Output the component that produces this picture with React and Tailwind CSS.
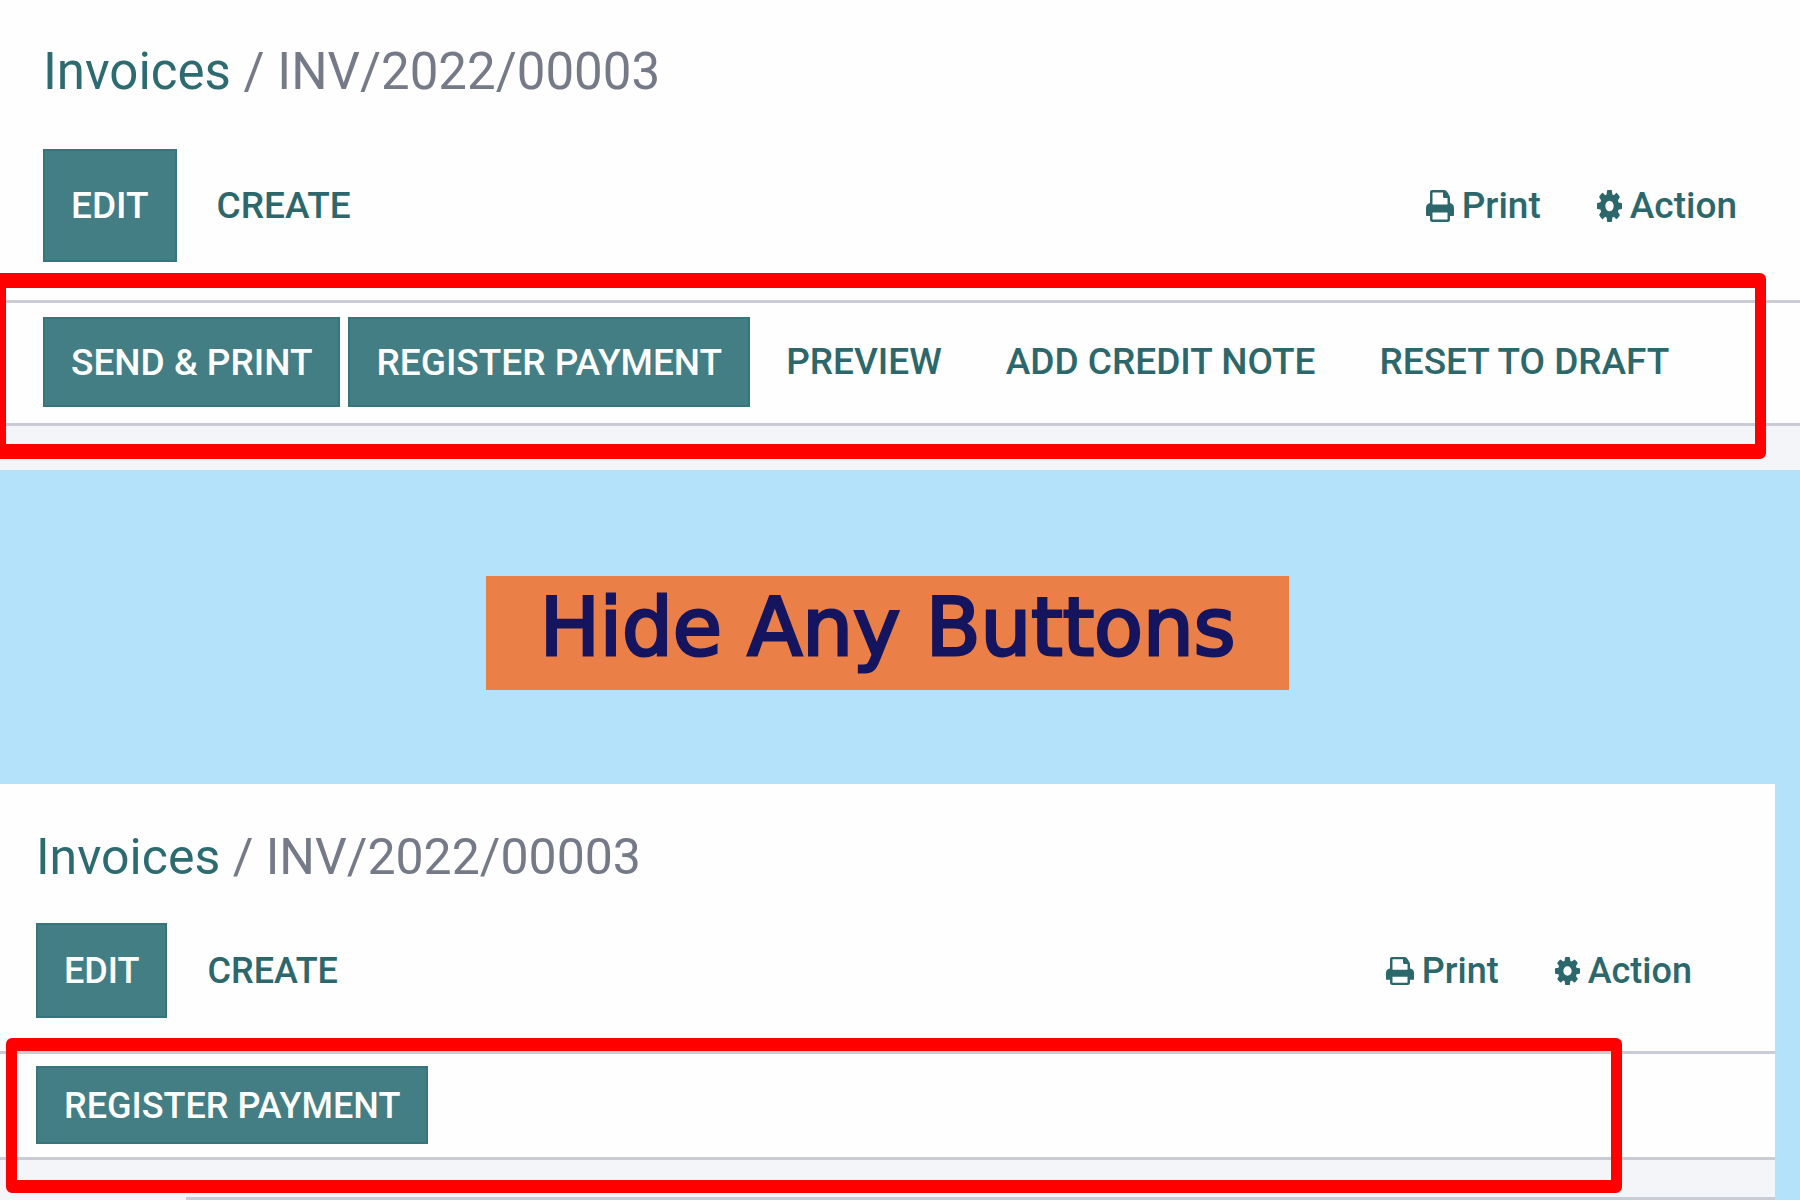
function PrintIcon({ className }) {
  return (
    <svg className={className} viewBox="0 0 28 32" preserveAspectRatio="none" fill="currentColor" aria-hidden="true">
      <path
        fillRule="evenodd"
        d="M6 0H18Q20 0 21 1.500L23 5Q24 6.500 24 8V13Q28 14 28 18V25Q28 26 27 26H24V29.500Q24 32 21.500 32H6.500Q4 32 4 29.500V26H1Q0 26 0 25V18Q0 14 4 13V2Q4 0 6 0ZM6.500 2.500V14.500H21.500V8H18.500Q17 8 17 6.500V2.500ZM6.500 22.500V29.500H21.500V22.500Z"
      />
    </svg>
  );
}

function CogIcon({ className }) {
  return (
    <svg className={className} viewBox="0 128 1536 1536" preserveAspectRatio="none" fill="currentColor" aria-hidden="true">
      <path d="M1024 896q0-106-75-181t-181-75-181 75-75 181 75 181 181 75 181-75 75-181zM1536 787v222q0 12-8 23t-20 13l-185 28q-19 54-39 91 35 50 107 138 10 12 10 25t-9 23q-27 37-99 108t-94 71q-12 0-26-9l-138-108q-44 23-91 38-16 136-29 186-7 28-36 28h-222q-14 0-24.5-8.5t-11.5-21.5l-28-184q-49-16-90-37l-141 107q-10 9-25 9-14 0-25-11-126-114-165-168-7-10-7-23 0-12 8-23 15-21 51-66.5t54-70.5q-27-50-41-99l-183-27q-13-2-21-12.5t-8-23.5v-222q0-12 8-23t19-13l186-28q14-46 39-92-40-57-107-138-10-12-10-24 0-10 9-23 26-36 98.5-107.5t94.5-71.5q13 0 26 10l138 107q44-23 91-38 16-136 29-186 7-28 36-28h222q14 0 24.5 8.5t11.5 21.5l28 184q49 16 90 37l142-107q9-9 24-9 13 0 25 10 129 119 165 170 7 8 7 22 0 12-8 23-15 21-51 66.5t-54 70.5q26 50 41 98l183 28q13 2 21 12.5t8 23.5z" />
    </svg>
  );
}

function Primary({ className, children }) {
  return (
    <button type="button" className={`bg-[#427e84] px-7 whitespace-nowrap text-white shadow-[inset_0_0_0_2px_#35757b] ${className}`}>
      {children}
    </button>
  );
}

function Plain({ children }) {
  return (
    <button type="button" className="flex items-center gap-2 px-7 whitespace-nowrap">
      {children}
    </button>
  );
}

function Breadcrumb({ className }) {
  return (
    <nav aria-label="Breadcrumb" className={`leading-[60px] font-normal whitespace-nowrap text-[#747a88] ${className}`}>
      <a href="#invoices" className="text-[#2c6b70]">Invoices</a> / <span aria-current="page">INV/2022/00003</span>
    </nav>
  );
}

function InvoiceBefore() {
  return (
    <section className="overflow-hidden bg-[#fefefe] text-[37px] leading-[46px] font-medium text-[#2c676b]">
      <header className="pt-[42px] pr-[35px] pb-[38px] pl-[43px]">
        <Breadcrumb className="text-[51px]" />
        <div className="mt-[47px] flex items-center justify-between">
          <div className="flex gap-3">
            <Primary className="pt-[34px] pb-[33px]">EDIT</Primary>
            <Plain>CREATE</Plain>
          </div>
          <div className="flex">
            <Plain><PrintIcon className="h-8 w-7" />Print</Plain>
            <Plain><CogIcon className="h-8 w-[25px]" />Action</Plain>
          </div>
        </div>
      </header>
      <div className="relative bg-[#f4f5f9] pb-11">
        <div className="flex gap-2 border-y-[3px] border-[#c9ccd4] bg-[#fefefe] pt-[14px] pb-4 pl-[43px]">
          <Primary className="pt-[23px] pb-[21px]">SEND &amp; PRINT</Primary>
          <Primary className="pt-[23px] pb-[21px]">REGISTER PAYMENT</Primary>
          <Plain>PREVIEW</Plain>
          <Plain>ADD CREDIT NOTE</Plain>
          <Plain>RESET TO DRAFT</Plain>
        </div>
        <div className="pointer-events-none absolute -top-[27px] right-[34px] bottom-[11px] -left-[5px] rounded-md border-x-[11px] border-y-[15px] border-[#ff0000]" />
      </div>
    </section>
  );
}

function InvoiceAfter() {
  return (
    <section className="mr-[25px] bg-[#fefefe] text-[36px] leading-[44px] font-medium text-[#2c676b]">
      <header className="pt-[43px] pr-[55px] pb-[33px] pl-9">
        <Breadcrumb className="text-[50px]" />
        <div className="mt-9 flex items-center justify-between">
          <div className="flex gap-3">
            <Primary className="pt-[26px] pb-[25px]">EDIT</Primary>
            <Plain>CREATE</Plain>
          </div>
          <div className="flex">
            <Plain><PrintIcon className="h-7 w-7" />Print</Plain>
            <Plain><CogIcon className="h-7 w-[25px]" />Action</Plain>
          </div>
        </div>
      </header>
      <div className="relative bg-[#f4f5f9]">
        <div className="flex border-y-[3px] border-[#c9ccd4] bg-[#fefefe] pt-3 pb-[13px] pl-9">
          <Primary className="pt-[18px] pb-4">REGISTER PAYMENT</Primary>
        </div>
        <div className="h-[37px]" />
        <div className="ml-[186px] h-[3px] bg-[#c9ccd4]" />
        <div className="pointer-events-none absolute -top-[13px] right-[153px] bottom-[7px] left-[6px] rounded-md border-x-[11px] border-y-[13px] border-[#ff0000]" />
      </div>
    </section>
  );
}

export default function App() {
  return (
    <main className="min-h-screen bg-[#b4e2fa] font-['Roboto',sans-serif]">
      <InvoiceBefore />
      <div className="flex justify-center pt-[106px] pr-[25px] pb-[94px]">
        <h1 className="bg-[#ea8047] px-[54px] pt-[7px] pb-[17px] font-['DejaVu_Sans',sans-serif] text-[80px] leading-[90px] font-normal whitespace-nowrap text-[#15155f] [-webkit-text-stroke:3px_#15155f]">
          Hide Any Buttons
        </h1>
      </div>
      <InvoiceAfter />
    </main>
  );
}
